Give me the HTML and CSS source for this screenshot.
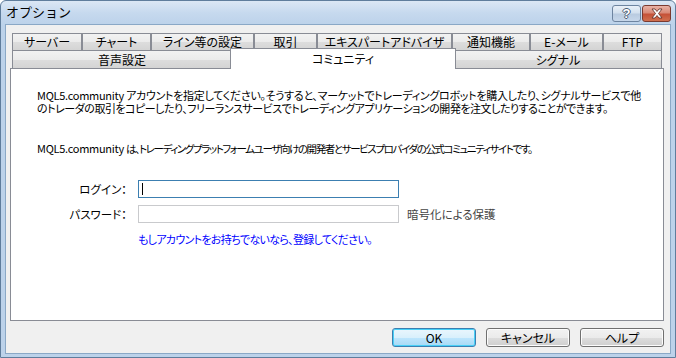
FILE: index.html
```html
<!DOCTYPE html>
<html lang="ja">
<head>
<meta charset="utf-8">
<title>オプション</title>
<link rel="stylesheet" href="styles.css">
</head>
<body>
<div class="window">
  <div class="titlebar">
    <span class="title">オプション</span>
    <div class="caption-btns">
      <div class="cap cap-help"><span class="q">?</span></div>
      <div class="cap cap-close">
        <svg width="14" height="11" viewBox="0 0 14 11">
          <path d="M2 1 L5 1 L7 3.5 L9 1 L12 1 L8.5 5.5 L12 10 L9 10 L7 7.5 L5 10 L2 10 L5.5 5.5 Z" fill="#fff" stroke="#5b2a22" stroke-width="0.8" stroke-linejoin="round"/>
        </svg>
      </div>
    </div>
  </div>
  <div class="client">
    <div class="tabs">
      <div class="tabrow row1">
        <div class="tab">サーバー</div>
        <div class="tab">チャート</div>
        <div class="tab">ライン等の設定</div>
        <div class="tab">取引</div>
        <div class="tab">エキスパートアドバイザ</div>
        <div class="tab">通知機能</div>
        <div class="tab">E-メール</div>
        <div class="tab">FTP</div>
      </div>
      <div class="tabrow row2">
        <div class="tab">音声設定</div>
        <div class="tab active">コミュニティ</div>
        <div class="tab">シグナル</div>
      </div>
    </div>
    <div class="panel">
      <p class="para"><span class="l1">MQL5.community アカウントを指定してください。そうすると、マーケットでトレーディングロボットを購入したり、シグナルサービスで他</span><br><span class="l2">のトレーダの取引をコピーしたり、フリーランスサービスでトレーディングアプリケーションの開発を注文したりすることができます。</span></p>
      <p class="para para2"><span class="l1">MQL5.community </span><span class="l3">は、トレーディングプラットフォームユーザ向けの開発者とサービスプロバイダの公式コミュニティサイトです。</span></p>
      <div class="form">
        <div class="frow">
          <span class="label">ログイン：</span>
          <div class="input focused"><span class="caret"></span></div>
        </div>
        <div class="frow">
          <span class="label">パスワード：</span>
          <div class="input"></div>
          <span class="note">暗号化による保護</span>
        </div>
        <div class="frow">
          <span class="label"></span>
          <span class="link">もしアカウントをお持ちでないなら、登録してください。</span>
        </div>
      </div>
    </div>
    <div class="buttons">
      <div class="btn default">OK</div>
      <div class="btn">キャンセル</div>
      <div class="btn">ヘルプ</div>
    </div>
  </div>
</div>
</body>
</html>
```
FILE: styles.css
```css
html, body {
  margin: 0;
  padding: 0;
  width: 676px;
  height: 358px;
  overflow: hidden;
  background: #fff;
}
body {
  font-family: "Noto Sans CJK JP", "Noto Sans", sans-serif;
  font-size: 12px;
  color: #000;
  font-feature-settings: "palt";
}
.window {
  box-sizing: border-box;
  width: 676px;
  height: 358px;
  border: 1px solid #5f7d9c;
  border-radius: 6px 6px 0 0;
  background: linear-gradient(#dbe7f4 0px, #c6d9ee 12px, #bcd2ea 24px, #bcd2ea 100%);
  display: flex;
  flex-direction: column;
}
.titlebar {
  height: 23px;
  display: flex;
  align-items: flex-start;
  padding: 0 4px 0 5px;
}
.title {
  margin-top: 3px;
  font-size: 13px;
  line-height: 16px;
  font-feature-settings: normal;
  color: #000;
}
.caption-btns {
  margin-left: auto;
  margin-top: 4px;
  display: flex;
  gap: 1px;
}
.cap {
  box-sizing: border-box;
  height: 17px;
  border: 1px solid #6d84a0;
  border-radius: 3px;
  display: flex;
  align-items: center;
  justify-content: center;
}
.cap-help {
  width: 29px;
  background: linear-gradient(#e9f0f8 0%, #d3e0ee 45%, #b9cbe0 55%, #c7d7ea 100%);
}
.q {
  color: #fff;
  font-family: "Liberation Sans", sans-serif;
  font-weight: bold;
  font-size: 13px;
  line-height: 13px;
  text-shadow: 1px 0 #4a5d75, -1px 0 #4a5d75, 0 1px #4a5d75, 0 -1px #4a5d75;
}
.cap-close {
  width: 29px;
  border-color: #7a3a30;
  background: linear-gradient(#e8b2a6 0%, #d98a78 45%, #c55138 55%, #d0704f 100%);
}
.client {
  flex: 1;
  margin: 0 4px 3px 4px;
  border: 1px solid #8aa8c6;
  background: #f0f0f0;
  display: flex;
  flex-direction: column;
  padding: 0 6px 0 4px;
}
.tabs {
  margin: 8px 2px 0 2px;
  display: flex;
  flex-direction: column;
}
.tabrow {
  display: grid;
}
.row1 {
  grid-template-columns: 70px 69px 103px 63px 135px 78px 73px 59px;
  height: 17px;
}
.row2 {
  grid-template-columns: 220px 222px 208px;
  height: 18px;
}
.tab {
  box-sizing: border-box;
  border: 1px solid #898c95;
  border-bottom: none;
  background: linear-gradient(#f2f2f2 0%, #ebebeb 50%, #dddddd 51%, #d4d4d4 100%);
  text-align: center;
  line-height: 16px;
  white-space: nowrap;
  overflow: hidden;
}
.row2 .tab {
  line-height: 17px;
}
.tab.active {
  position: relative;
  z-index: 2;
  background: #fff;
  margin: -2px -2px -1px -2px;
  line-height: 19px;
}
.panel {
  box-sizing: border-box;
  height: 253px;
  border: 1px solid #898c95;
  background: #fff;
  padding: 20px 0 0 26px;
  white-space: nowrap;
  font-size: 11px;
}
.para {
  margin: 0;
  line-height: 13px;
}
.l1 { letter-spacing: -0.28px; }
.l2 { letter-spacing: -0.48px; }
.l3 { letter-spacing: -1.4px; font-size: 10.5px; }
.para2 {
  margin-top: 27px;
}
.form {
  margin-top: 25px;
  display: flex;
  flex-direction: column;
  gap: 7px;
  font-size: 11.5px;
}
.frow {
  display: flex;
  align-items: center;
  height: 18px;
}
.label {
  width: 91px;
  text-align: right;
  margin-left: -1px;
  margin-right: 11px;
}
.input {
  box-sizing: border-box;
  width: 261px;
  height: 18px;
  border: 1px solid #c9cacd;
  background: #fff;
  display: flex;
  align-items: center;
}
.input.focused {
  border-color: #3c7fb1;
}
.caret {
  width: 1px;
  height: 12px;
  background: #000;
  margin-left: 3px;
}
.note {
  margin-left: 8px;
  color: #444;
}
.link {
  color: #0000ff;
  font-size: 11px;
  letter-spacing: -0.7px;
}
.buttons {
  display: flex;
  justify-content: flex-end;
  gap: 10px;
  margin-top: 7px;
  padding-right: 0;
}
.btn {
  box-sizing: border-box;
  width: 84px;
  height: 19px;
  border: 1px solid #707070;
  border-radius: 3px;
  background: linear-gradient(#f2f2f2 0%, #ebebeb 50%, #dddddd 51%, #cfcfcf 100%);
  text-align: center;
  line-height: 17px;
  box-shadow: inset 0 0 0 1px #fcfcfc;
}
.btn.default {
  border-color: #3c7fb1;
  background: linear-gradient(#eaf6fd 0%, #d9f0fc 50%, #bee6fd 51%, #a7d9f5 100%);
  box-shadow: inset 0 0 0 1px #48d0f7;
}
```
